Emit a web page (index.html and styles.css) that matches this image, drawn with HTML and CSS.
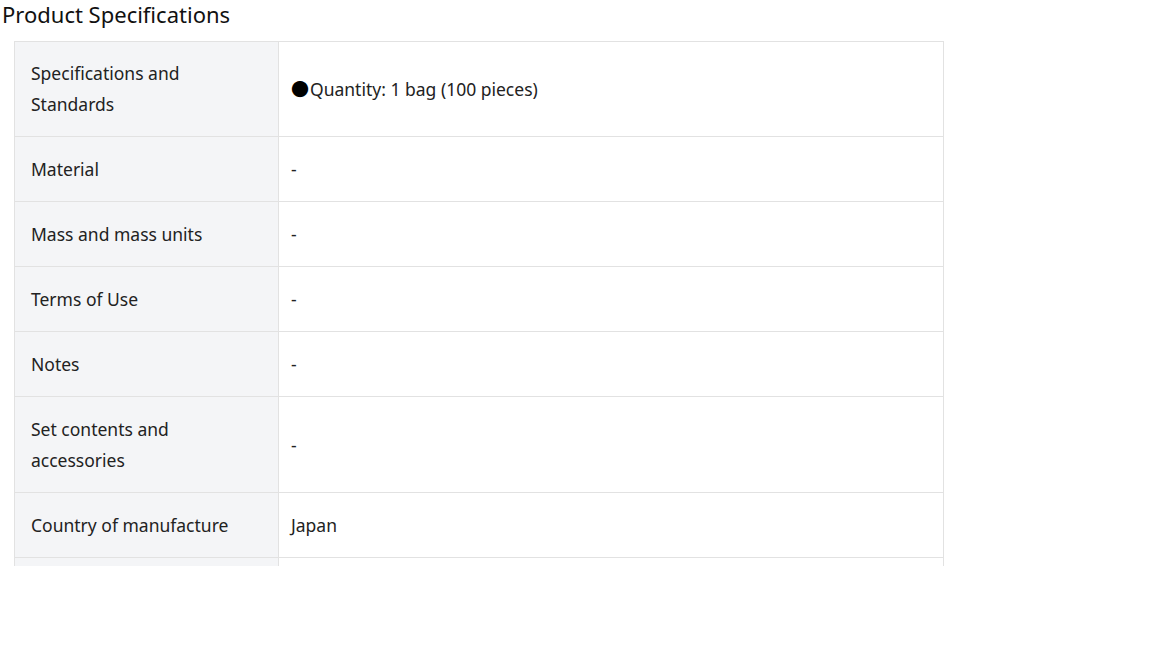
FILE: index.html
```html
<!DOCTYPE html>
<html lang="en">
<head>
<meta charset="utf-8">
<title>Product Specifications</title>
<link rel="stylesheet" href="styles.css">
</head>
<body>
<section class="spec">
  <h2 class="spec-title">Product Specifications</h2>
  <div class="spec-body">
    <table class="spec-table">
      <tbody>
        <tr class="row-first"><th>Specifications and<br>Standards</th><td><span class="bullet">●</span>Quantity: 1 bag (100 pieces)</td></tr>
        <tr><th>Material</th><td>-</td></tr>
        <tr><th>Mass and mass units</th><td>-</td></tr>
        <tr><th>Terms of Use</th><td>-</td></tr>
        <tr><th>Notes</th><td>-</td></tr>
        <tr><th>Set contents and<br>accessories</th><td>-</td></tr>
        <tr><th>Country of manufacture</th><td>Japan</td></tr>
        <tr><th></th><td></td></tr>
      </tbody>
    </table>
  </div>
</section>
</body>
</html>
```
FILE: styles.css
```css
html, body {
  margin: 0;
  padding: 0;
  background: #fff;
}
body {
  font-family: "Noto Sans", "Noto Sans CJK JP", sans-serif;
  color: #222;
}
.spec {
  height: 566px;
  overflow: hidden;
}
.spec-title {
  margin: 0;
  padding: 0 0 0 2px;
  font-size: 22px;
  font-weight: normal;
  line-height: 29px;
  color: #111;
}
.spec-body {
  padding: 12px 0 0 14px;
}
.spec-table {
  width: 930px;
  border-collapse: collapse;
  font-size: 17.5px;
  line-height: 31px;
}
.spec-table th,
.spec-table td {
  border: 1px solid #e2e2e2;
  padding: 17px 12px 16px;
  height: 31px;
  text-align: left;
  vertical-align: middle;
  font-weight: normal;
}
.spec-table th {
  width: 235px;
  padding-left: 16px;
  background: #f4f5f7;
  color: #222;
}
.row-first th,
.row-first td {
  padding-top: 16px;
}
.spec-table td {
  color: #222;
}
.value-text {
  letter-spacing: 0.2px;
}
.bullet {
  color: #000;
  font-size: 18px;
  margin-right: 1px;
}
```
